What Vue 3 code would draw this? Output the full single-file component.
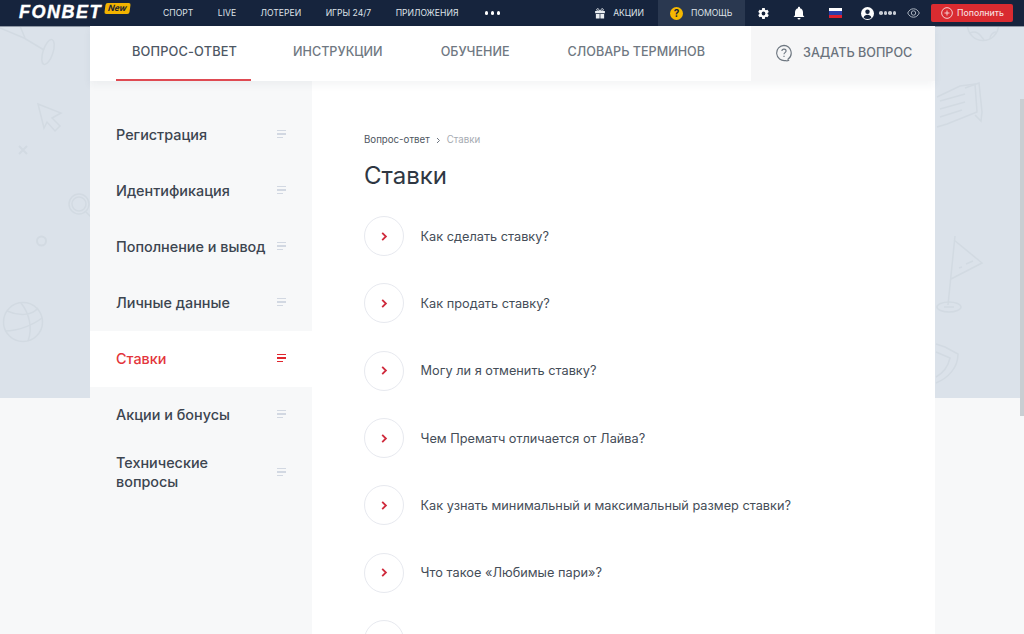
<script setup>
const nav = ['СПОРТ', 'LIVE', 'ЛОТЕРЕИ', 'ИГРЫ 24/7', 'ПРИЛОЖЕНИЯ']
const tabs = [
  { label: 'ВОПРОС-ОТВЕТ', active: true },
  { label: 'ИНСТРУКЦИИ' },
  { label: 'ОБУЧЕНИЕ' },
  { label: 'СЛОВАРЬ ТЕРМИНОВ' },
]
const cats = [
  { label: 'Регистрация' },
  { label: 'Идентификация' },
  { label: 'Пополнение и вывод' },
  { label: 'Личные данные' },
  { label: 'Ставки', active: true },
  { label: 'Акции и бонусы' },
  { label: 'Технические вопросы', tall: true },
]
const questions = [
  'Как сделать ставку?',
  'Как продать ставку?',
  'Могу ли я отменить ставку?',
  'Чем Прематч отличается от Лайва?',
  'Как узнать минимальный и максимальный размер ставки?',
  'Что такое «Любимые пари»?',
  '',
]
</script>

<template>
  <div class="page">
    <svg class="decor" width="1024" height="398" viewBox="0 0 1024 398" fill="none" stroke="#d2dae2" stroke-width="1.500">
      <path d="M0 28 L24 38 M20 26 L25 38 M24 38 L44 50" />
      <ellipse cx="48" cy="52" rx="5" ry="13" transform="rotate(18 48 52)" />
      <path d="M38 104 L61 113 L52 118 L60 126 L55 131 L47 122 L44 128 Z" />
      <path d="M19 146 L27 154 M27 146 L19 154" stroke-width="2" />
      <circle cx="79" cy="204" r="10" /><circle cx="79" cy="204" r="7" /><path d="M86 212 L92 218" />
      <circle cx="41.500" cy="241" r="4.500" stroke-width="2" />
      <circle cx="23" cy="322" r="19.500" />
      <path d="M7 311 C18 316 32 316 38 308 M5 331 C18 331 33 325 42 318 M21 303 C29 313 33 328 28 341" />
      <path d="M937 97 L960 86 L975 84 L977 112 L947 124 L937 127 M940 101 L965 94 M940 109 L965 102 M940 117 L962 110" />
      <path d="M965 88 L979 83 L982 112 L981 121 L975 115" />
      <path d="M955 236 L948 305 M954 240 L982 263 L951 279 M959 268 L962 267 M966 264 L973 261" />
      <ellipse cx="949" cy="307" rx="12" ry="5" /><path d="M944 307 L954 307" />
      <path d="M936 344 L945 347 L958 354 C958 368 948 378 936 383 M936 352 L950 358 C948 367 943 373 936 377" />
      <circle cx="983" cy="25" r="15.500" />
      <path d="M970 33 C976 30 980 34 984 40 M990 39 C990 35 993 32 996 32" />
    </svg>

    <header class="topbar">
      <div class="logo">
        <span class="logo-word">FONBET</span>
        <span class="logo-new">New</span>
      </div>
      <nav class="main-nav">
        <span v-for="n in nav" :key="n" class="nav-item">{{ n }}</span>
        <span class="dots"><i></i><i></i><i></i></span>
      </nav>
      <div class="top-right">
        <span class="promo">
          <svg width="12" height="13" viewBox="0 0 16 16" fill="#e9edf1">
            <path d="M1.500 4.500h13v3h-13zM2.500 8.500h5v6h-5zM8.500 8.500h5v6h-5z" />
            <path d="M8 4.500C6 1 3.500 1 3.500 3s2.500 1.500 4.500 1.500c2-0 4.500 .5 4.500-1.500S10 1 8 4.500z" fill="none" stroke="#e9edf1" stroke-width="1.200" />
          </svg>
          <span>АКЦИИ</span>
        </span>
        <span class="help">
          <span class="help-badge">?</span>
          <span>ПОМОЩЬ</span>
        </span>
        <svg class="gear" width="13" height="13" viewBox="0 0 24 24" fill="#fff">
          <path d="M19.400 13a7.500 7.500 0 0 0 0-2l2.400-1.900-2.400-4.100-2.900 1.100a7.500 7.500 0 0 0-1.700-1L14.400 2H9.600l-.5 3.100a7.500 7.500 0 0 0-1.700 1L4.600 5 2.200 9.100 4.600 11a7.500 7.500 0 0 0 0 2l-2.400 1.900L4.600 19l2.800-1.100a7.500 7.500 0 0 0 1.700 1l.5 3.100h4.800l.4-3.100a7.500 7.500 0 0 0 1.700-1l2.900 1.100 2.400-4.100zM12 15.500a3.500 3.500 0 1 1 0-7 3.500 3.500 0 0 1 0 7z" />
        </svg>
        <svg class="bell" width="12" height="14" viewBox="0 0 12 14" fill="#fff">
          <path d="M6 0.800c.6 0 1 .4 1 1v.5c2 .5 3 2.100 3 4.200v2.800l1.400 1.700H.6L2 9.300V6.500c0-2.100 1-3.700 3-4.200v-.5c0-.6.400-1 1-1zM4.500 12h3a1.500 1.500 0 0 1-3 0z" />
        </svg>
        <span class="flag"><i class="w"></i><i class="b"></i><i class="r"></i></span>
        <svg class="user" width="13" height="13" viewBox="0 0 14 14">
          <circle cx="7" cy="7" r="7" fill="#fff" />
          <circle cx="7" cy="5.200" r="2.400" fill="#16243d" />
          <path d="M2.800 11.500c.6-2.200 2.200-3.100 4.200-3.100s3.600.9 4.200 3.100A6 6 0 0 1 7 13a6 6 0 0 1-4.200-1.500z" fill="#16243d" />
        </svg>
        <span class="stars"><i></i><i></i><i></i><i></i></span>
        <svg class="eye" width="13" height="10" viewBox="0 0 13 10" fill="none" stroke="#aab3bf" stroke-width="1">
          <path d="M.700 5C2 2.200 4 .800 6.500 .800S11 2.200 12.300 5C11 7.800 9 9.200 6.500 9.200S2 7.800 .700 5z" />
          <circle cx="6.500" cy="5" r="2.200" />
        </svg>
        <span class="deposit">
          <svg width="12" height="12" viewBox="0 0 13 13" fill="none" stroke="#f6dcdc" stroke-width="1">
            <circle cx="6.500" cy="6.500" r="5.800" /><path d="M6.500 3.800v5.400M3.800 6.500h5.400" />
          </svg>
          <span>Пополнить</span>
        </span>
      </div>
    </header>

    <main class="sheet">
      <div class="tabs">
        <div class="tab-list">
          <span v-for="t in tabs" :key="t.label" class="tab" :class="{ active: t.active }">{{ t.label }}</span>
        </div>
        <div class="ask">
          <svg width="18" height="18" viewBox="0 0 19 19" fill="none" stroke="#6e7781" stroke-width="1.200">
            <path d="M9.500 1.500a8 8 0 1 0 1.500 15.900c1 .5 2.400 .4 3.300 0-.4-.4-.6-.8-.6-1.400A8 8 0 0 0 9.500 1.500z" />
            <path d="M7.300 7.500c0-1.300 1-2.100 2.200-2.100s2.200 .8 2.200 2c0 1.800-2.200 1.700-2.200 3.500M9.500 12.500v1.200" />
          </svg>
          <span>ЗАДАТЬ ВОПРОС</span>
        </div>
      </div>
      <div class="body">
        <aside class="side">
          <div v-for="c in cats" :key="c.label" class="cat" :class="{ active: c.active, tall: c.tall }">
            <span class="cat-label">{{ c.label }}</span>
            <span class="cat-icon"><i></i><i></i><i></i></span>
          </div>
        </aside>
        <section class="content">
          <div class="crumbs">
            <span>Вопрос-ответ</span>
            <svg width="5" height="7" viewBox="0 0 5 7" fill="none" stroke="#6d7580" stroke-width="1"><path d="M1 1l2.500 2.500L1 6" /></svg>
            <span class="crumb-now">Ставки</span>
          </div>
          <h1>Ставки</h1>
          <ul class="qlist">
            <li v-for="(q, i) in questions" :key="i" class="q">
              <span class="q-circle">
                <svg width="7" height="9" viewBox="0 0 7 9" fill="none" stroke="#cf2a3c" stroke-width="1.800"><path d="M1.200 .900l3.700 3.600-3.700 3.600" /></svg>
              </span>
              <span class="q-text">{{ q }}</span>
            </li>
          </ul>
        </section>
      </div>
    </main>
    <div class="scrollthumb"></div>
  </div>
</template>

<style>
html, body { margin: 0; overflow: hidden; }
</style>

<style scoped>
.page {
  position: relative;
  width: 1024px;
  height: 634px;
  overflow: hidden;
  background: linear-gradient(#dbe2ea 0, #dbe2ea 398px, #f7f8f9 398px);
  font-family: Inter, "Liberation Sans", sans-serif;
}
.decor { position: absolute; left: 0; top: 0; }
.topbar {
  position: relative;
  height: 26px;
  background: #16243d;
  display: flex;
  align-items: center;
  color: #dfe3e8;
  font-size: 8.600px;
  box-shadow: 0 1px 0 #8f98a5;
}
.logo { display: flex; align-items: flex-start; width: 163px; height: 26px; padding-left: 19px; box-sizing: border-box; flex: none; }
.logo-word {
  font-family: "Liberation Sans", sans-serif;
  font-weight: 700;
  font-style: italic;
  font-size: 18px;
  letter-spacing: 1.500px;
  color: #fff;
  line-height: 24px;
  -webkit-text-stroke: .4px #fff;
}
.logo-new {
  margin: 3px 0 0 3px;
  background: #f2b300;
  color: #1d2430;
  font-weight: 700;
  font-style: italic;
  font-size: 8.500px;
  line-height: 11px;
  height: 11px;
  padding: 0 3px;
  border-radius: 2px;
  transform: skewX(-8deg);
}
.main-nav { display: flex; align-items: center; gap: 24.500px; }
.nav-item { white-space: nowrap; }
.dots { display: flex; gap: 2.500px; margin-left: 2px; }
.dots i { width: 3.500px; height: 3.500px; border-radius: 50%; background: #fff; display: block; }
.top-right { margin-left: auto; display: flex; align-items: center; height: 26px; }
.promo { display: flex; align-items: center; gap: 7px; margin-right: 14px; }
.help { display: flex; align-items: center; gap: 8px; background: #2a3850; height: 26px; width: 87px; box-sizing: border-box; padding-left: 12px; }
.help-badge {
  width: 13px; height: 13px; border-radius: 50%;
  background: #f5b800; color: #16243d; font-weight: 700; font-size: 10px;
  display: flex; align-items: center; justify-content: center;
}
.gear { margin-left: 12px; }
.bell { margin-left: 23px; }
.flag { width: 13px; height: 10px; margin-left: 24px; display: flex; flex-direction: column; }
.flag i { flex: 1; display: block; }
.flag .w { background: #fff; }
.flag .b { background: #2b3fa8; }
.flag .r { background: #e0202c; }
.user { margin-left: 19px; }
.stars { display: flex; gap: 1px; margin-left: 5px; }
.stars i { width: 3.500px; height: 3.500px; border-radius: 50%; background: #c9ced6; display: block; }
.eye { margin-left: 11px; }
.deposit {
  display: flex; align-items: center; gap: 4px;
  width: 82px; height: 18px; margin: 0 11px 0 11px;
  box-sizing: border-box; padding-left: 10px;
  background: #d92b30; color: #f6dcdc; border-radius: 2px;
  font-weight: 500; font-size: 8.700px;
}
.sheet {
  position: relative;
  width: 845px;
  margin-left: 90px;
  min-height: 608px;
  background: #fff;
}
.tabs {
  display: flex;
  height: 55px;
  box-shadow: 0 4px 8px rgba(40, 50, 70, .05);
  position: relative;
  z-index: 1;
}
.tab-list { display: flex; width: 661px; background: #fff; padding-left: 26px; box-sizing: border-box; }
.tab {
  color: #6f7882;
  font-size: 12.600px;
  font-weight: 500;
  line-height: 51px;
  height: 55px;
  box-sizing: border-box;
  padding: 0 16px;
  margin-right: 26px;
  white-space: nowrap;
}
.tab.active { color: #4d5764; border-bottom: 2px solid #df4a52; font-size: 12.800px; letter-spacing: .15px; width: 135px; }
.ask {
  flex: 1;
  background: #f6f6f7;
  display: flex;
  align-items: center;
  gap: 10px;
  padding: 0 0 2px 24px;
  color: #6a727c;
  font-size: 12.600px;
  font-weight: 500;
}
.body { display: flex; }
.side { width: 222px; flex: none; background: #f7f8f9; min-height: 553px; padding-top: 26px; box-sizing: border-box; }
.cat {
  height: 56px;
  display: flex;
  align-items: center;
  justify-content: space-between;
  padding: 0 26px 2px 26px;
  box-sizing: border-box;
  color: #3c4550;
  font-size: 14.400px;
  font-weight: 500;
}
.cat.tall { line-height: 19px; height: 60px; }
.cat.tall .cat-label { width: 130px; }
.cat.active { background: #fff; color: #e3353b; }
.cat-icon { display: flex; flex-direction: column; gap: 2px; width: 9px; align-items: flex-start; flex: none; }
.cat-icon i { display: block; height: 1.500px; background: #d2d8e2; width: 9px; }
.cat-icon i:last-child { width: 6px; }
.cat.active .cat-icon i { background: #e0262e; }
.content { flex: 1; padding: 52px 0 0 52px; }
.crumbs { display: flex; align-items: center; gap: 6px; font-size: 9.700px; color: #4e5661; line-height: 14px; height: 14px; }
.crumb-now { color: #a6abb2; }
h1 { margin: 13px 0 0; font-size: 24px; font-weight: 400; color: #2f3742; line-height: 32px; }
.qlist { list-style: none; margin: 24px 0 0; padding: 0; }
.q { display: flex; align-items: center; height: 40px; margin-bottom: 27.350px; gap: 16.500px; }
.q-circle {
  width: 40px; height: 40px; box-sizing: border-box; flex: none;
  border: 1px solid #e7e9ef; border-radius: 50%;
  display: flex; align-items: center; justify-content: center;
}
.q-circle svg { margin-left: 1px; }
.q-text { color: #454d58; font-size: 12.750px; }
.scrollthumb { position: absolute; right: 0; top: 99px; width: 4px; height: 317px; background: #c9ced2; }
</style>
